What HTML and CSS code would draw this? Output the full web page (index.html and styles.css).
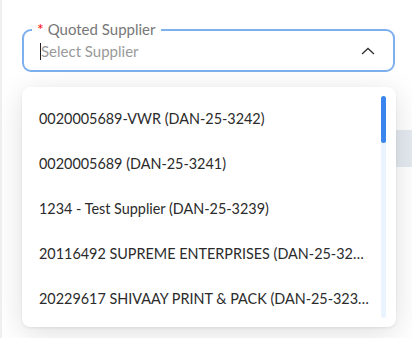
FILE: index.html
```html
<!DOCTYPE html>
<html lang="en">
<head>
    <meta charset="UTF-8">
    <meta name="viewport" content="width=device-width, initial-scale=1.0">
    <title>Quoted Supplier</title>
    <link rel="stylesheet" href="styles.css">
</head>
<body>
    <div class="page">
        <!-- supplier select -->
        <div class="field">
            <label class="field-label"><span class="req">*</span> Quoted Supplier</label>
            <div class="field-input">
                <span class="caret"></span>
                <span class="placeholder">Select Supplier</span>
            </div>
            <svg class="chevron" width="14" height="8" viewBox="0 0 14 8">
                <path d="M1 7 L7 1.5 L13 7" fill="none" stroke="#333" stroke-width="1.3"/>
            </svg>
        </div>

        <div class="table-head"></div>

        <!-- dropdown list -->
        <div class="dropdown">
            <ul class="options">
                <li>0020005689-VWR (DAN-25-3242)</li>
                <li>0020005689 (DAN-25-3241)</li>
                <li>1234 - Test Supplier (DAN-25-3239)</li>
                <li>20116492 SUPREME ENTERPRISES (DAN-25-3240)</li>
                <li>20229617 SHIVAAY PRINT &amp; PACK (DAN-25-3238)</li>
            </ul>
            <div class="scroll-track"><div class="scroll-thumb"></div></div>
        </div>
    </div>
</body>
</html>
```

FILE: styles.css
```css
body {
    margin: 0;
    font-family: Lato, "Open Sans", sans-serif;
    background-color: #fff;
}
.page {
    position: relative;
    height: 338px;
    border-left: 2px solid #efefef;
    padding-top: 29px;
    box-sizing: border-box;
    overflow: hidden;
}
.field {
    position: relative;
    margin-left: 20px;
    width: 373px;
    height: 43px;
    border: 2px solid #7eb0ef;
    border-radius: 9px;
    box-sizing: border-box;
    background-color: #fff;
}
.field-label {
    position: absolute;
    top: -11px;
    left: 8px;
    padding: 0 6px 0 5px;
    background-color: #fff;
    color: #777;
    font-size: 15px;
    line-height: 18px;
}
.req {
    color: #f00;
    font-size: 16px;
}
.field-input {
    display: flex;
    align-items: center;
    height: 100%;
    padding-left: 16px;
    padding-top: 1px;
    box-sizing: border-box;
}
.caret {
    width: 1px;
    height: 17px;
    background-color: #222;
}
.placeholder {
    color: #9a9a9a;
    font-size: 15px;
}
.chevron {
    position: absolute;
    right: 18px;
    top: 16px;
}
.table-head {
    margin-top: 58px;
    margin-left: 40px;
    height: 37px;
    background-color: #e5eaf1;
}

/* dropdown popup */
.dropdown {
    position: absolute;
    top: 87px;
    left: 20px;
    width: 374px;
    height: 240px;
    background-color: #fff;
    border-radius: 8px;
    box-shadow: 0 6px 30px rgba(0, 0, 0, 0.13), 0 1px 3px rgba(0, 0, 0, 0.08);
}
.options {
    list-style: none;
    margin: 0;
    padding: 9px 0 0 0;
}
.options li {
    height: 45px;
    line-height: 45px;
    padding: 0 26px 0 17px;
    font-size: 14.4px;
    color: #2b2b2b;
    white-space: nowrap;
    overflow: hidden;
    text-overflow: ellipsis;
}
.scroll-track {
    position: absolute;
    top: 9px;
    bottom: 9px;
    right: 10px;
    width: 5px;
    border-radius: 3px;
    background-color: #eaf3fe;
}
.scroll-thumb {
    height: 47px;
    border-radius: 3px;
    background-color: #3a86ee;
}
```
